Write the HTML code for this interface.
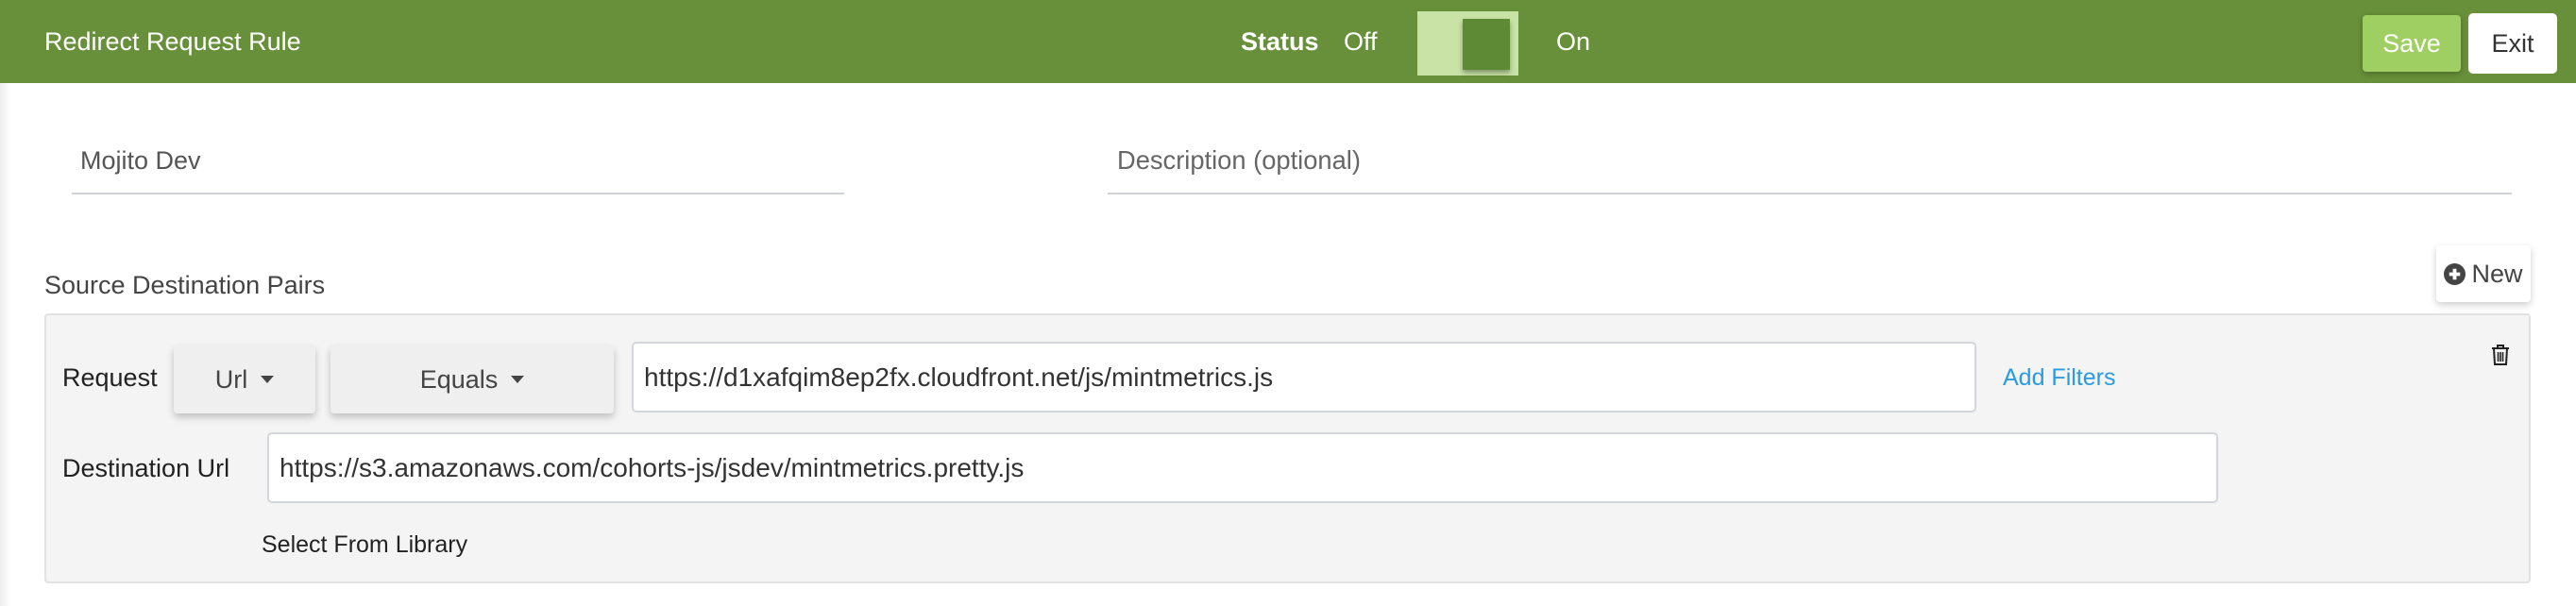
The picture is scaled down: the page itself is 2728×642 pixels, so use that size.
<!DOCTYPE html>
<html><head><meta charset="utf-8"><style>
*{box-sizing:border-box;margin:0;padding:0}
body{width:2728px;height:642px;background:#fff;font-family:"Liberation Sans",Arial,sans-serif;position:relative;overflow:hidden;color:#222}
.abs{position:absolute}
.hdr{left:0;top:0;width:2728px;height:88px;background:#688f39}
.t{font-size:27px;line-height:32px;white-space:nowrap}
.edge{left:0;top:88px;width:12px;height:554px;background:linear-gradient(to right,#eee,#fff)}
.inp{background:#fff;border:2px solid #d3d6da;border-radius:5px;font-size:28px;color:#333;padding-left:11px;display:flex;align-items:center;white-space:nowrap}
.btn{background:#efefef;border-radius:4px;box-shadow:0 4px 8px rgba(0,0,0,.22);font-size:27px;color:#444;display:flex;align-items:center;justify-content:center}
.car{display:inline-block;width:0;height:0;border-left:7px solid transparent;border-right:7px solid transparent;border-top:8px solid #444;margin-left:14px;vertical-align:middle}
</style></head><body>
<div class="abs hdr"></div>
<div class="abs t" style="left:47px;top:28px;color:#fff;font-size:27px">Redirect Request Rule</div>
<div class="abs t" style="left:1314px;top:28px;color:#fff;font-weight:bold">Status</div>
<div class="abs t" style="left:1423px;top:28px;color:#fff">Off</div>
<div class="abs" style="left:1501px;top:12px;width:107px;height:68px;background:#c9e3a6"></div>
<div class="abs" style="left:1549px;top:20px;width:50px;height:54px;background:#5e8a36;box-shadow:0 3px 5px rgba(0,0,0,.35)"></div>
<div class="abs t" style="left:1648px;top:28px;color:#fff">On</div>
<div class="abs" style="left:2502px;top:16px;width:104px;height:60px;background:#9fcf62;border-radius:4px;box-shadow:0 2px 6px rgba(0,0,0,.25);color:#fff;font-size:27px;display:flex;align-items:center;justify-content:center">Save</div>
<div class="abs" style="left:2614px;top:14px;width:94px;height:64px;background:#fff;border-radius:5px;color:#333;font-size:27px;display:flex;align-items:center;justify-content:center">Exit</div>
<div class="abs edge"></div>
<div class="abs t" style="left:85px;top:154px;color:#555">Mojito Dev</div>
<div class="abs" style="left:76px;top:204px;width:818px;height:2px;background:#cfd3d8"></div>
<div class="abs t" style="left:1183px;top:154px;color:#666;font-size:27.3px">Description (optional)</div>
<div class="abs" style="left:1173px;top:204px;width:1487px;height:2px;background:#cfd3d8"></div>
<div class="abs t" style="left:47px;top:286px;color:#444">Source Destination Pairs</div>
<div class="abs" style="left:2580px;top:260px;width:100px;height:60px;background:#fff;border-radius:4px;box-shadow:0 3px 8px rgba(0,0,0,.2);display:flex;align-items:center;justify-content:center;font-size:27px;color:#444">
<svg width="23" height="23" viewBox="0 0 24 24" style="margin-right:6px"><circle cx="12" cy="12" r="12" fill="#444"/><path d="M12 6v12M6 12h12" stroke="#fff" stroke-width="4"/></svg>New</div>
<div class="abs" style="left:47px;top:332px;width:2633px;height:286px;background:#f4f4f4;border:2px solid #e2e2e2;border-radius:4px"></div>
<svg class="abs" style="left:2638px;top:364px" width="20" height="24" viewBox="0 0 20 24"><path d="M1 5h18M7 5V2h6v3M3 5l1 17h12l1-17" fill="none" stroke="#222" stroke-width="2"/><path d="M7.5 9v10M10 9v10M12.5 9v10" stroke="#222" stroke-width="1.6"/></svg>
<div class="abs t" style="left:66px;top:384px">Request</div>
<div class="abs btn" style="left:184px;top:366px;width:150px;height:72px">Url<span class="car"></span></div>
<div class="abs btn" style="left:350px;top:366px;width:300px;height:72px">Equals<span class="car"></span></div>
<div class="abs inp" style="left:669px;top:362px;width:1424px;height:75px">https://d1xafqim8ep2fx.cloudfront.net/js/mintmetrics.js</div>
<div class="abs t" style="left:2121px;top:384px;color:#2a9be2;font-size:25px">Add Filters</div>
<div class="abs t" style="left:66px;top:480px">Destination Url</div>
<div class="abs inp" style="left:283px;top:458px;width:2066px;height:75px">https://s3.amazonaws.com/cohorts-js/jsdev/mintmetrics.pretty.js</div>
<div class="abs t" style="left:277px;top:561px;font-size:25px">Select From Library</div>
</body></html>
